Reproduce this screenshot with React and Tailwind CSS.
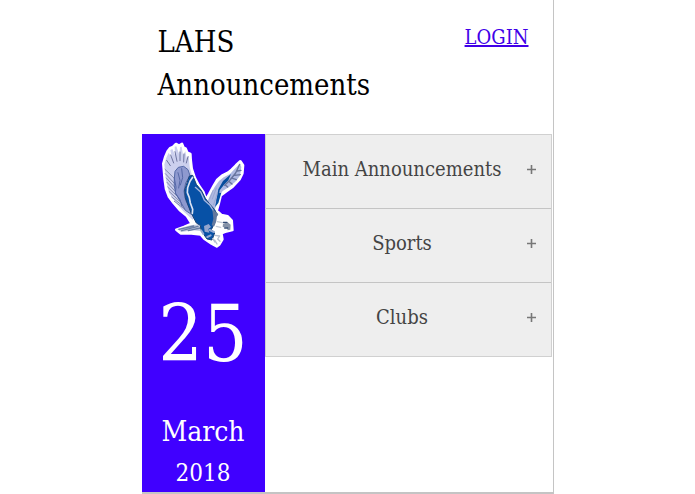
const sections = ["Main Announcements", "Sports", "Clubs"];

function Eagle() {
  return (
    <svg viewBox="60 30 261 330" className="h-[110px] w-[87px]" role="img" aria-label="Eagle">
      <g strokeLinejoin="round" strokeLinecap="round">
        <path d="M70 101 L76 80 L83 64 L90 55 L99 51 L108 42 L117 47 L126 42 L130 52 L137 56 L142 68 L151 72 L152 90 L155 116 L164 143 L176 166 L190 186 L198 209 L208 192 L221 168 L232 149 L246 137 L264 128 L275 119 L288 106 L301 94 L309 106 L307 130 L299 147 L278 170 L258 184 L242 196 L236 221 L230 242 L244 255 L263 259 L275 272 L277 300 L259 304 L244 310 L247 328 L238 343 L230 349 L215 341 L193 326 L182 313 L154 310 L122 310 L109 299 L132 291 L155 281 L141 258 L119 240 L101 219 L87 200 L78 176 L74 147 Z" fill="#fff" stroke="#fff" strokeWidth="8" />

        {/* Left wing */}
        <path d="M73 103 L79 83 L86 68 L95 84 L91 60 L97 57 L105 75 L104 50 L109 49 L118 74 L120 52 L125 50 L129 75 L136 64 L140 84 L146 77 L149 111 L157 139 L144 160 L138 190 L148 225 L153 245 L169 262 L158 269 L130 244 L105 215 L87 188 L78 150 Z" fill="#ccd0ee" />
        <path d="M80 91 L91 107 M92 75 L101 99 M105 65 L111 94 M120 66 L120 92 M132 72 L131 96 M144 80 L139 99" stroke="#6f76a0" strokeWidth="3" fill="none" />
        <path d="M75 118 L105 147 M76 131 L104 161 M79 144 L106 174 M81 157 L109 188 M83 171 L114 201 M88 185 L119 214 M95 201 L126 226 M103 214 L136 239" stroke="#868caf" strokeWidth="3" fill="none" />
        <path d="M103 145 L105 124 L115 112 L131 109 L144 119 L150 137 L137 159 L132 184 L137 211 L148 232 L154 253 L136 241 L121 214 L107 190 L103 168 Z" fill="#8e99cf" stroke="#5368a6" strokeWidth="3" />
        <path d="M103 145 L108 171 L106 190 L120 209 L126 229 M114 128 L120 151 L116 174 M125 116 L128 143 L121 165" stroke="#5668a7" strokeWidth="3" fill="none" />

        {/* Right wing */}
        <path d="M202 215 L212 193 L224 171 L237 153 L251 142 L270 132 L286 115 L300 101 L304 111 L300 137 L286 155 L268 170 L248 183 L239 195 L232 218 L224 239 L213 231 Z" fill="#aeb9e2" />
        <path d="M273 132 L265 151 L252 164 L239 181 L236 201 L228 219 L235 178 L249 153 Z" fill="#074d9c" />
        <path d="M244 188 L235 219 L225 231 L231 205 L236 190 Z" fill="#0651a5" />
        <path d="M299 103 L287 129 L270 150 L254 166 M303 121 L292 123 M301 134 L284 136 M289 149 L278 145 M276 162 L268 155 M263 171 L256 165" stroke="#67749d" strokeWidth="4" fill="none" />
        <path d="M219 181 L209 207 M229 174 L217 207 M233 187 L221 224" stroke="#8f9bc9" strokeWidth="2" fill="none" />

        {/* Tail */}
        <path d="M111 297 L151 286 L183 282 L185 304 L159 301 L124 306 Z" fill="#c6cde0" />
        <path d="M117 298 L161 288 M125 302 L174 289 M145 302 L181 294" stroke="#687da4" strokeWidth="4" fill="none" />

        {/* Body and shoulder */}
        <path d="M149 138 L158 136 L169 163 L184 181 L196 205 L208 221 L224 239 L230 251 L224 279 L214 299 L224 309 L216 330 L201 327 L191 313 L183 298 L181 286 L169 279 L154 250 L145 228 L136 203 L134 181 Z" fill="#0751a6" stroke="#194477" strokeWidth="3" />
        <path d="M158 142 L150 154 L143 173 L142 188 L148 203 L151 219 L158 238 L157 250" stroke="#dce3f3" strokeWidth="5" fill="none" />
        <path d="M166 172 L182 186 L193 211 L210 226 L219 240 L225 252" stroke="#a7b7df" strokeWidth="4" fill="none" />
        <path d="M217 238 L235 252 L230 263 L240 270 L228 276 L223 289 L215 286 L220 266 Z" fill="#62789e" />
        <path d="M192 288 L206 282 L213 291 L205 297 L208 308 L194 305 Z" fill="#93a4cd" />
        <path d="M184 302 L190 312 M209 300 L222 306 M202 321 L212 316" stroke="#92a8d3" strokeWidth="6" fill="none" />

        {/* Head, beak and talons */}
        <path d="M231 259 L246 256 L261 264 L270 275 L262 285 L239 287 L228 278 Z" fill="#fff" />
        <path d="M249 281 L263 277 L272 284 L271 299 L263 301 L261 293 L248 291 Z" fill="#8592a7" />
        <path d="M250 277 L261 277 M254 294 L263 294" stroke="#344e77" strokeWidth="4" fill="none" />
        <path d="M232 275 L247 278 M229 289 L242 292" stroke="#c4cad5" strokeWidth="4" fill="none" />
        <path d="M224 316 L239 318 L233 327 L240 334 M224 330 L231 342 M218 326 L225 336" stroke="#b5bed0" strokeWidth="4" fill="none" />
      </g>
    </svg>
  );
}

export default function App() {
  return (
    <main className="mx-auto w-full max-w-[412px] border-r border-b-2 border-[#c4c4c4] bg-white font-['DejaVu_Serif_Condensed','DejaVu_Serif',serif]">
      <header className="flex items-start justify-between pt-[21px] pr-6 pb-[27px] pl-4">
        <h1 className="w-60 text-[29px] leading-[43px] text-black">LAHS Announcements</h1>
        <a href="#login" className="pt-0.5 text-xl text-[#4000e8] underline">LOGIN</a>
      </header>
      <div className="flex items-stretch pr-px">
        <aside className="flex w-[123px] flex-col items-center bg-[#4000ff] pt-1.5 text-white">
          <Eagle />
          <p className="mt-10 text-[78px] leading-[88px]">25</p>
          <p className="mt-8 text-[28px] leading-[44px]">March</p>
          <p className="text-2xl leading-[38px]">2018</p>
        </aside>
        <div className="flex-1">
          <div className="divide-y divide-[#c4c4c4] border border-[#d0d0d0]">
            {sections.map((s) => (
              <button key={s} type="button" className="flex h-[74px] w-full items-center bg-[#eee] pr-[15px] pb-1.5 pl-3 text-xl text-[#444] last:h-[73px]">
                <span className="flex-1">{s}</span>
                <svg viewBox="0 0 9 9" className="mt-0.5 h-[9px] w-[9px]" aria-hidden="true">
                  <path d="M4.5 0V9M0 4.5H9" stroke="#777" strokeWidth="1.6" />
                </svg>
              </button>
            ))}
          </div>
        </div>
      </div>
    </main>
  );
}
